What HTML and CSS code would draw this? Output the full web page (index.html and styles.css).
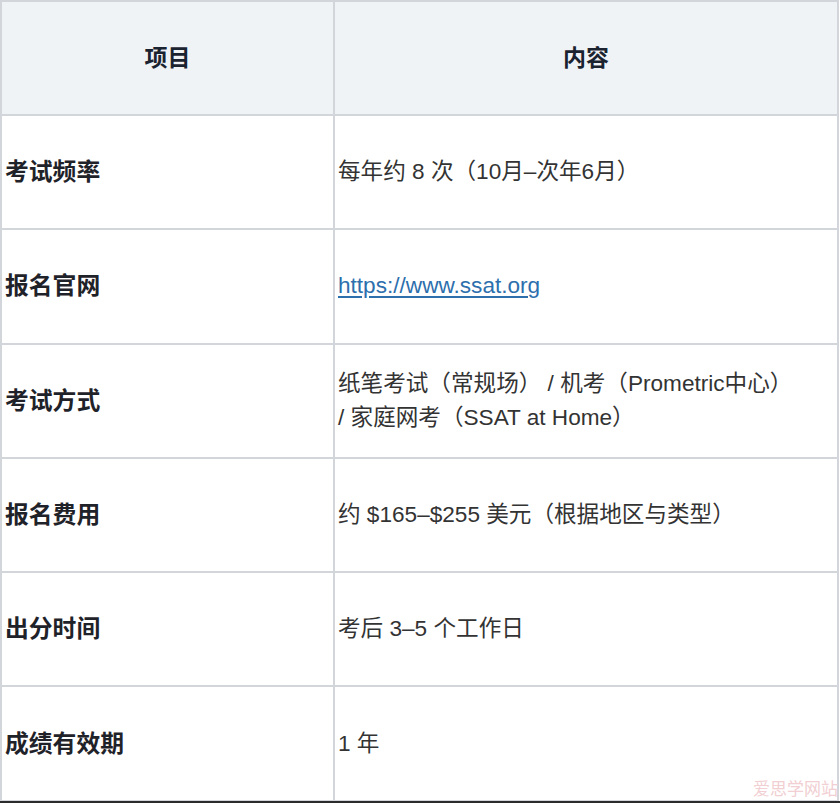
FILE: index.html
```html
<!DOCTYPE html>
<html lang="zh-CN">
<head>
<meta charset="utf-8">
<link rel="stylesheet" href="styles.css">
</head>
<body>
<div class="page">
  <table class="info">
    <colgroup><col class="c1"><col class="c2"></colgroup>
    <thead>
      <tr><th>项目</th><th>内容</th></tr>
    </thead>
    <tbody>
      <tr><td class="label">考试频率</td><td>每年约 8 次（10月–次年6月）</td></tr>
      <tr><td class="label">报名官网</td><td><a class="link" href="#">https://www.ssat.org</a></td></tr>
      <tr><td class="label">考试方式</td><td>纸笔考试（常规场） / 机考（Prometric中心）<br>/ 家庭网考（SSAT at Home）</td></tr>
      <tr><td class="label">报名费用</td><td>约 $165–$255 美元（根据地区与类型）</td></tr>
      <tr><td class="label">出分时间</td><td>考后 3–5 个工作日</td></tr>
      <tr><td class="label">成绩有效期</td><td>1 年</td></tr>
    </tbody>
  </table>
  <div class="watermark">爱思学网站</div>
  <div class="bottom-bar"></div>
</div>
</body>
</html>
```
FILE: styles.css
```css
html, body {
  margin: 0;
  padding: 0;
  background: #ffffff;
}
.page {
  position: relative;
  width: 840px;
  height: 803px;
  overflow: hidden;
  font-family: "Liberation Sans", "Noto Sans CJK SC", sans-serif;
}
.info {
  border-collapse: collapse;
  width: 839px;
  table-layout: fixed;
}
.c1 { width: 333px; }
.info th, .info td {
  border: 2px solid #d2d5da;
  height: 112.3px;
  padding: 0 3px;
  vertical-align: middle;
  font-size: 22.6px;
  line-height: 34px;
}
.info th {
  background: #f0f3f6;
  color: #1b2330;
  font-weight: 700;
  text-align: center;
  font-size: 23px;
  height: 112px;
}
.info td {
  color: #333333;
  text-align: left;
}
.info td.label {
  font-weight: 700;
  color: #1f2329;
  font-size: 23.8px;
}
.link {
  color: #2d6fad;
  text-decoration: underline;
  text-underline-offset: 3px;
}
.watermark {
  position: absolute;
  right: 2px;
  bottom: 3px;
  font-size: 17px;
  line-height: 20px;
  color: #f1cfd2;
}
.bottom-bar {
  position: absolute;
  left: 0;
  right: 0;
  bottom: 0;
  height: 2px;
  background: #2b2b2b;
}
```
